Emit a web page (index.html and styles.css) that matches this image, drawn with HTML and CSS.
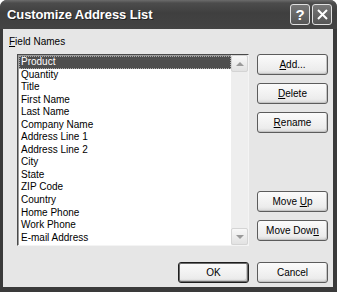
FILE: index.html
```html
<!DOCTYPE html>
<html lang="en">
<head>
    <meta charset="UTF-8">
    <title>Customize Address List</title>
    <link rel="stylesheet" href="styles.css">
</head>
<body>
    <div class="window">
        <div class="titlebar">
            <span class="title">Customize Address List</span>
            <div class="title-buttons">
                <span class="tbtn">?</span>
                <span class="tbtn">
                    <svg width="13" height="13" viewBox="0 0 13 13"><path d="M2 2 L11 11 M11 2 L2 11" stroke="#fff" stroke-width="2" fill="none"/></svg>
                </span>
            </div>
        </div>
        <div class="client">
            <div class="label"><u>F</u>ield Names</div>
            <div class="main">
                <div class="listbox">
                    <ul class="items">
                        <li class="selected">Product</li>
                        <li>Quantity</li>
                        <li>Title</li>
                        <li>First Name</li>
                        <li>Last Name</li>
                        <li>Company Name</li>
                        <li>Address Line 1</li>
                        <li>Address Line 2</li>
                        <li>City</li>
                        <li>State</li>
                        <li>ZIP Code</li>
                        <li>Country</li>
                        <li>Home Phone</li>
                        <li>Work Phone</li>
                        <li>E-mail Address</li>
                    </ul>
                    <div class="scrollbar">
                        <span class="arrow"><span class="tri up"></span></span>
                        <span class="arrow"><span class="tri down"></span></span>
                    </div>
                </div>
                <div class="side">
                    <button class="btn"><u>A</u>dd...</button>
                    <button class="btn"><u>D</u>elete</button>
                    <button class="btn"><u>R</u>ename</button>
                    <button class="btn push">Move <u>U</u>p</button>
                    <button class="btn">Move Dow<u>n</u></button>
                </div>
            </div>
            <div class="footer">
                <button class="btn default">OK</button>
                <button class="btn">Cancel</button>
            </div>
        </div>
    </div>
</body>
</html>
```

FILE: styles.css
```css
body {
    margin: 0;
    background-color: #fff;
    font-family: 'Liberation Sans', Arial, sans-serif;
}
.window {
    width: 337px;
    height: 292px;
    display: flex;
    flex-direction: column;
    background-color: #3a3a3a;
    border-radius: 7px 7px 0 0;
    overflow: hidden;
}
.titlebar {
    height: 29px;
    flex-shrink: 0;
    display: flex;
    align-items: center;
    padding: 0 5px 0 7px;
    background: linear-gradient(#6c6c6c 0, #4c4c4c 3px, #3f3f3f 45%, #444 100%);
}
.title {
    flex: 1;
    color: #fff;
    font-weight: bold;
    font-size: 13px;
    letter-spacing: -0.1px;
    text-shadow: 1px 1px 0 #222;
}
.title-buttons {
    display: flex;
    gap: 2px;
}
.tbtn {
    width: 18px;
    height: 19px;
    display: flex;
    align-items: center;
    justify-content: center;
    border: 1px solid #e0e0e0;
    border-radius: 3px;
    background: linear-gradient(#777, #555);
    color: #fff;
    font-weight: bold;
    font-size: 15px;
}
.client {
    flex: 1;
    display: flex;
    flex-direction: column;
    margin: 0 4px 5px 3px;
    padding: 7px 5px 0 6px;
    background-color: #e6e6e6;
    font-size: 10px;
    color: #000;
}
.label {
    line-height: 12px;
    height: 12px;
}
.main {
    display: flex;
    margin-top: 6px;
}
.listbox {
    width: 232px;
    height: 192px;
    box-sizing: border-box;
    margin-left: 8px;
    display: flex;
    background-color: #fff;
    border: 1px solid;
    border-color: #4a4a4a #f4f4f4 #f4f4f4 #4a4a4a;
    box-shadow: inset 1px 1px 0 #9a9a9a;
}
.items {
    flex: 1;
    list-style: none;
    margin: 1px 0 0 1px;
    padding: 0;
}
.items li {
    height: 12.55px;
    line-height: 12.55px;
    padding-left: 2px;
    white-space: nowrap;
}
.items li.selected {
    background-color: #4e4e4e;
    color: #fff;
    outline: 1px dotted #aaa;
    outline-offset: -1px;
}
.scrollbar {
    width: 17px;
    display: flex;
    flex-direction: column;
    justify-content: space-between;
    background-color: #eeeeee;
}
.arrow {
    height: 17px;
    box-sizing: border-box;
    display: flex;
    align-items: center;
    justify-content: center;
    border: 1px solid #d4d4d4;
    border-radius: 2px;
    background: linear-gradient(#f8f8f8, #e2e2e2);
}
.tri {
    width: 0;
    height: 0;
    border-left: 4px solid transparent;
    border-right: 4px solid transparent;
}
.tri.up {
    border-bottom: 4px solid #9a9a9a;
}
.tri.down {
    border-top: 4px solid #9a9a9a;
}
.side {
    display: flex;
    flex-direction: column;
    gap: 8px;
    margin-left: 8px;
    padding-bottom: 5px;
}
.side .push {
    margin-top: auto;
}
.btn {
    width: 71px;
    height: 21px;
    padding: 0;
    box-sizing: border-box;
    border: 1px solid #5c5c5c;
    border-radius: 3px;
    background: linear-gradient(#fbfbfb, #ececec 80%, #d6d6d6);
    box-shadow: inset -1px -1px 0 #c4c4c4;
    font-family: 'Liberation Sans', Arial, sans-serif;
    font-size: 10px;
    color: #000;
}
.footer {
    display: flex;
    justify-content: flex-end;
    gap: 8px;
    margin-top: 16px;
}
.btn.default {
    border: 1px solid #1e1e1e;
    box-shadow: inset 0 0 0 1px #6a6a6a, inset -2px -2px 0 #c4c4c4;
}
```
